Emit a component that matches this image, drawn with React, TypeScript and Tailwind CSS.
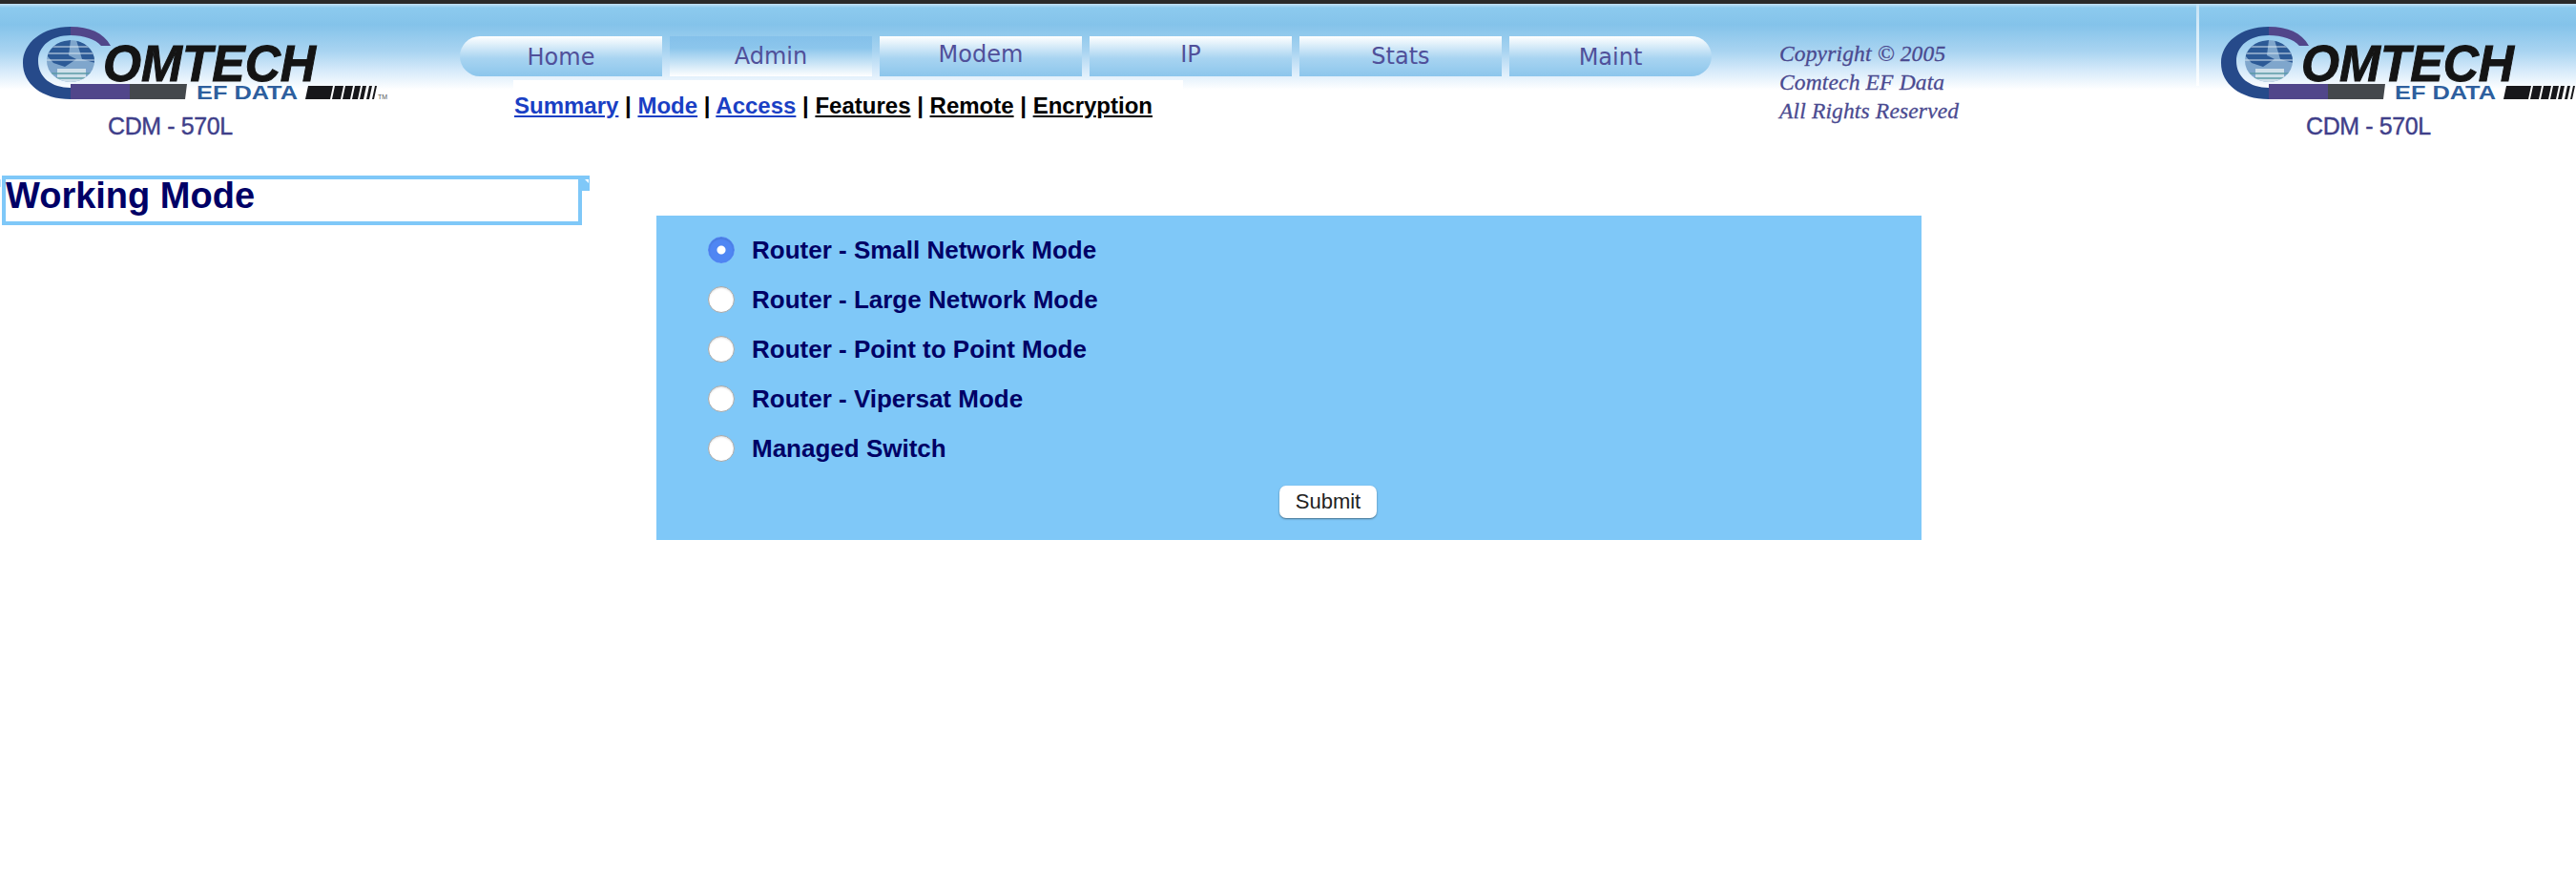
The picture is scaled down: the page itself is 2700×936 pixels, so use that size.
const SANS = "font-['Liberation_Sans',Arial,sans-serif]";

const TABS = [
  { label: "Home", shape: "rounded-l-[24px]", text: "pt-[2px]" },
  { label: "Admin", shape: "", text: "pt-0", active: true },
  { label: "Modem", shape: "", text: "pb-[4px]" },
  { label: "IP", shape: "", text: "pb-[4px]" },
  { label: "Stats", shape: "", text: "pb-0" },
  { label: "Maint", shape: "rounded-r-[24px]", text: "pt-[2px]" },
];

const MODES = [
  "Router - Small Network Mode",
  "Router - Large Network Mode",
  "Router - Point to Point Mode",
  "Router - Vipersat Mode",
  "Managed Switch",
];

const SUB_LINKS = [
  { label: "Summary", visited: true },
  { label: "Mode", visited: true },
  { label: "Access", visited: true },
  { label: "Features" },
  { label: "Remote" },
  { label: "Encryption" },
];

function Logo() {
  return (
    <svg width="384" height="80" viewBox="0 0 384 80" className="block shrink-0">
      <defs>
        <clipPath id="globe-clip">
          <ellipse cx="50" cy="36" rx="25" ry="22" />
        </clipPath>
      </defs>
      {/* the big C, navy half then purple half */}
      <path d="M50 0 C20 0 0 17 0 38 C0 60 20 76 50 76 L50 64 C30 64 16 53 16 36 C16 20 30 9 50 9 Z" fill="#264a8a" />
      <path d="M50 0 C70 0 84 6 92 20 L82 20 C76 13 64 9 50 9 Z" fill="#51468a" />
      <path d="M50 60 L112 60 L112 76 L50 76 Z" fill="#51468a" />
      <path d="M112 60 L172 60 L170 76 L112 76 Z" fill="#44484c" />
      {/* globe */}
      <ellipse cx="50" cy="36" rx="25" ry="22" fill="#7fa6cc" />
      <g clipPath="url(#globe-clip)">
        <path d="M25 18 L50 14 L48 30 L56 34 L44 42 L32 38 L25 30 Z" fill="#2c5a96" />
        <path d="M56 14 L76 22 L76 38 L62 34 Z" fill="#2c5a96" />
        <path d="M36 44 H66 V60 H36 Z" fill="#cfe0ea" />
        <path d="M24 21 H76 M24 28 H76 M24 35 H76" stroke="#d8e6f0" strokeWidth="1" />
        <path d="M30 49 H72 M34 54 H66" stroke="#5c9aa6" strokeWidth="1.5" />
      </g>
      {/* wordmark */}
      <text x="84" y="57" textLength="223" lengthAdjust="spacingAndGlyphs" fontFamily="'Liberation Sans', Arial, sans-serif" fontWeight="700" fontStyle="italic" fontSize="53" fill="#141414" stroke="#141414" strokeWidth="1">
        OMTECH
      </text>
      <text x="182" y="76" textLength="106" lengthAdjust="spacingAndGlyphs" fontFamily="'Liberation Sans', Arial, sans-serif" fontWeight="700" fontSize="20" fill="#2e5f9e">
        EF DATA
      </text>
      {/* barcode strip */}
      <path d="M299 62 H325 L322 76 H296 Z M327 62 H336 L333 76 H324 Z M338 62 H346 L343 76 H335 Z M348 62 H354 L351 76 H345 Z M356 62 H360 L357 76 H353 Z M363 62 H366 L363 76 H360 Z M369 62 H371 L368 76 H366 Z" fill="#17171a" />
      <text x="372" y="76" fontFamily="'Liberation Sans', Arial, sans-serif" fontSize="7" fill="#555">
        TM
      </text>
    </svg>
  );
}

function Brand({ className }: { className: string }) {
  return (
    <div className={className}>
      <div className="pt-[24px]">
        <Logo />
      </div>
      <div className={`${SANS} ml-[89px] mt-[9px] w-max text-[25px] leading-[30px] tracking-[-0.4px] text-[#3f3f8a] [-webkit-text-stroke:0.4px_#3f3f8a]`}>
        CDM - 570L
      </div>
    </div>
  );
}

export default function App() {
  return (
    <div className={`${SANS} min-h-[936px] w-full overflow-hidden bg-white`}>
      <div className="h-[4px] bg-[#2a2a2a]" />
      <header className="flex h-[180px] bg-[linear-gradient(#c4e2f5_0,#8ccaee_4px,#84c3ea_22px,#a9d4f1_50px,#d6eafa_70px,#fff_90px)]">
        <Brand className="ml-[24px] w-[458px] shrink-0" />

        <div className="w-[1312px] shrink-0 pt-[34px]">
          <nav className="flex gap-[8px]">
            {TABS.map((tab) => (
              <div
                key={tab.label}
                className={`flex h-[42px] w-[212px] items-center justify-center font-['DejaVu_Sans',sans-serif] text-[24px] text-[#50509a] ${tab.shape} ${tab.text} ${
                  tab.active
                    ? "bg-[linear-gradient(#84c0ea_0,#8cc6ec_30%,#ffffff_100%)]"
                    : "bg-[linear-gradient(#ffffff_0,#a8d4f1_55%,#8cc6ec_100%)]"
                }`}
              >
                {tab.label}
              </div>
            ))}
          </nav>
          <div className="ml-[56px] mt-[4px] h-[50px] w-[702px] bg-white pl-[1px] pt-[12px] text-[24px] font-bold leading-[30px] text-black">
            {SUB_LINKS.map((link, i) => (
              <span key={link.label}>
                {i > 0 && " | "}
                <a className={`underline ${link.visited ? "text-[#1a3fc4]" : "text-black"}`}>{link.label}</a>
              </span>
            ))}
          </div>
        </div>

        <div className="ml-[71px] w-[437px] shrink-0 pt-[37px] font-['Liberation_Serif',serif] text-[23.5px] italic leading-[30px] tracking-[0.15px] text-[#4a4a90] [-webkit-text-stroke:0.3px_#4a4a90]">
          <div>Copyright © 2005</div>
          <div>Comtech EF Data</div>
          <div>All Rights Reserved</div>
        </div>

        <div className="h-[86px] w-[3px] shrink-0 bg-[linear-gradient(#c4e2f5,#ffffff)]" />
        <Brand className="ml-[23px] shrink-0" />
      </header>

      <main className="flex items-start">
        <div className="relative ml-[2px] h-[52px] w-[608px] shrink-0 border-[4px] border-[#7fc8f8] bg-white">
          <h1 className="text-[38px] font-bold leading-[34px] text-[#000066]">Working Mode</h1>
          <div className="absolute right-[-12px] top-[-4px] h-[16px] w-[8px] bg-[#7fc8f8]">
            <div className="ml-[3px] mt-[4px] h-0 w-0 border-l-[4px] border-t-[4px] border-l-transparent border-t-white" />
          </div>
          <div className="absolute left-[-6px] top-0 h-[8px] w-[1px] bg-[#bfe3fb]" />
        </div>

        <form className="ml-[78px] mt-[42px] h-[340px] w-[1326px] shrink-0 bg-[#7fc8f8] pl-[54px] pt-[10px]">
          {MODES.map((mode, i) => (
            <label key={mode} className="flex h-[52px] items-center gap-[18px] text-[26px] font-bold text-[#000066]">
              <input
                type="radio"
                name="mode"
                defaultChecked={i === 0}
                className="h-[28px] w-[28px] appearance-none rounded-full border border-[#a8a8a8] bg-white shadow-[inset_0_1px_2px_rgba(0,0,0,0.15)] checked:border-[#4f86f3] checked:bg-[radial-gradient(circle,#fff_0,#fff_4px,#4f86f3_5px)]"
              />
              {mode}
            </label>
          ))}
          <button
            type="button"
            className="ml-[599px] mt-[13px] h-[34px] w-[102px] rounded-[7px] bg-white text-[22px] leading-none text-[#222] shadow-[0_1px_2px_rgba(0,0,0,0.45)]"
          >
            Submit
          </button>
        </form>
      </main>
    </div>
  );
}
